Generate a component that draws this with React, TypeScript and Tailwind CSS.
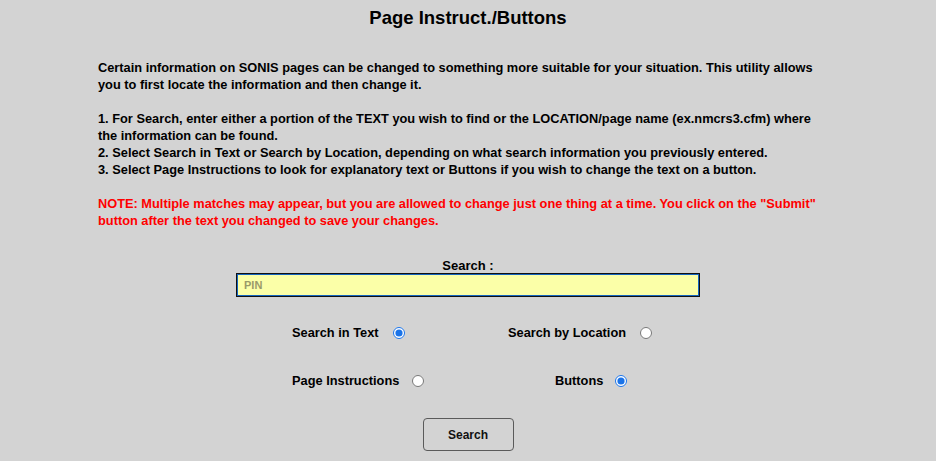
import { useState } from "react";

const font = "font-['Century_Gothic','Liberation_Sans',Arial,sans-serif]";

function Radio({ checked, onChange }: { checked: boolean; onChange: () => void }) {
  return (
    <input
      type="radio"
      checked={checked}
      onChange={onChange}
      className="m-0 h-[12px] w-[12px] accent-[#1a73e8]"
    />
  );
}

export default function App() {
  const [where, setWhere] = useState<"text" | "location">("text");
  const [kind, setKind] = useState<"page" | "buttons">("buttons");
  const [query, setQuery] = useState("");

  return (
    <div className={`min-h-[461px] w-full bg-[#d3d3d3] text-black ${font}`}>
      <h1 className="pt-[6px] text-center text-[18.5px] font-bold leading-[24px]">Page Instruct./Buttons</h1>

      <div className="mx-auto mt-[29px] w-[740px] text-[12.8px] font-bold leading-[17px]">
        <p className="whitespace-nowrap">
          Certain information on SONIS pages can be changed to something more suitable for your situation. This utility allows
          <br />
          you to first locate the information and then change it.
        </p>
        <p className="mt-[17px] whitespace-nowrap">
          1. For Search, enter either a portion of the TEXT you wish to find or the LOCATION/page name (ex.nmcrs3.cfm) where
          <br />
          the information can be found.
          <br />
          2. Select Search in Text or Search by Location, depending on what search information you previously entered.
          <br />
          3. Select Page Instructions to look for explanatory text or Buttons if you wish to change the text on a button.
        </p>
        <p className="mt-[17px] whitespace-nowrap text-[#ff0000]">
          NOTE: Multiple matches may appear, but you are allowed to change just one thing at a time. You click on the "Submit"
          <br />
          button after the text you changed to save your changes.
        </p>
      </div>

      <div className="mt-[30px] flex flex-col items-center">
        <label className="text-[13px] font-bold leading-[14px]">Search :</label>
        <input
          value={query}
          onChange={(e) => setQuery(e.target.value)}
          placeholder="PIN"
          className="mt-0 h-[24px] w-[464px] border border-[#111] bg-[#fbffa8] px-[7px] font-['Liberation_Sans',Arial,sans-serif] text-[11px] font-bold shadow-[inset_0_0_0_1px_#1565c0] outline-none placeholder:text-[#9a9a6a]"
        />
      </div>

      <div className="mt-[28px] text-[12.8px] font-bold leading-[16px]">
        <div className="flex items-center pl-[292px]">
          <div className="flex w-[216px] items-center gap-[14px]">
            <span>Search in Text</span>
            <Radio checked={where === "text"} onChange={() => setWhere("text")} />
          </div>
          <div className="flex items-center gap-[14px]">
            <span>Search by Location</span>
            <Radio checked={where === "location"} onChange={() => setWhere("location")} />
          </div>
        </div>
        <div className="mt-[32px] flex items-center pl-[292px]">
          <div className="flex w-[263px] items-center gap-[13px]">
            <span>Page Instructions</span>
            <Radio checked={kind === "page"} onChange={() => setKind("page")} />
          </div>
          <div className="flex items-center gap-[12px]">
            <span>Buttons</span>
            <Radio checked={kind === "buttons"} onChange={() => setKind("buttons")} />
          </div>
        </div>
      </div>

      <div className="mt-[29px] flex justify-center">
        <button className="h-[33px] w-[91px] rounded-[4px] border border-[#5a5a5a] bg-[#d3d3d3] font-['Liberation_Sans',Arial,sans-serif] text-[12px] font-bold text-[#111]">
          Search
        </button>
      </div>
    </div>
  );
}
